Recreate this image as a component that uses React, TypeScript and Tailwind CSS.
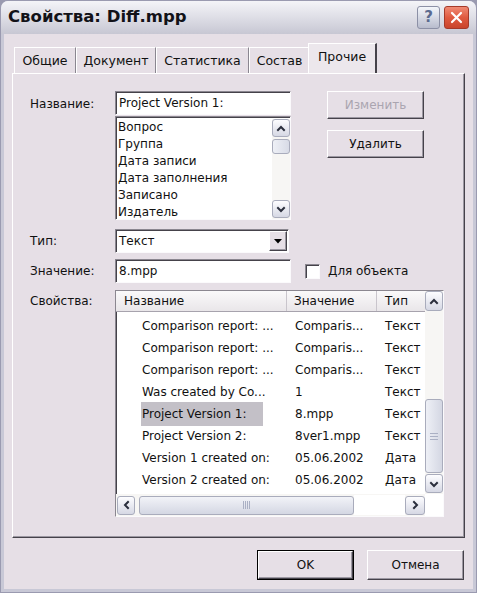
import type { ReactNode } from "react";

const FONT = { fontFamily: '"DejaVu Sans", Verdana, sans-serif' };

function Chevron({ dir }: { dir: "up" | "down" | "left" | "right" }) {
  const d = {
    up: "M2 7 L5 4 L8 7",
    down: "M2 4 L5 7 L8 4",
    left: "M7 2 L4 5 L7 8",
    right: "M4 2 L7 5 L4 8",
  }[dir];
  return (
    <svg width="10" height="10" viewBox="0 0 10 10">
      <path d={d} fill="none" stroke="#2b2f3d" strokeWidth="2" strokeLinecap="square" />
    </svg>
  );
}

function ScrollBtn({ dir, className = "" }: { dir: "up" | "down" | "left" | "right"; className?: string }) {
  return (
    <div
      className={`flex items-center justify-center rounded-[3px] border border-[#a9acbc] bg-gradient-to-b from-[#fdfdff] to-[#d6d8e4] ${className}`}
    >
      <Chevron dir={dir} />
    </div>
  );
}

function Sunken({ className = "", children }: { className?: string; children?: ReactNode }) {
  return (
    <div
      className={`border border-t-[#8b8790] border-l-[#8b8790] border-r-[#fbfafc] border-b-[#fbfafc] shadow-[inset_1px_1px_0_#45424a] bg-white ${className}`}
    >
      {children}
    </div>
  );
}

function Raised({
  className = "",
  children,
  disabled,
}: {
  className?: string;
  children: ReactNode;
  disabled?: boolean;
}) {
  return (
    <div
      className={`flex items-center justify-center border border-t-white border-l-white border-r-[#45424a] border-b-[#45424a] shadow-[inset_-1px_-1px_0_#9c98a2] bg-[#e6dfe6] text-[12px] ${
        disabled ? "text-[#aaa5b0]" : "text-[#111]"
      } ${className}`}
    >
      {children}
    </div>
  );
}

const tabs = [
  { label: "Общие", w: 62 },
  { label: "Документ", w: 80 },
  { label: "Статистика", w: 93 },
  { label: "Состав", w: 61 },
];

const listItems = ["Вопрос", "Группа", "Дата записи", "Дата заполнения", "Записано", "Издатель"];

const rows = [
  ["Comparison report: ...", "Comparis...", "Текст"],
  ["Comparison report: ...", "Comparis...", "Текст"],
  ["Comparison report: ...", "Comparis...", "Текст"],
  ["Was created by Co...", "1", "Текст"],
  ["Project Version 1:", "8.mpp", "Текст"],
  ["Project Version 2:", "8ver1.mpp", "Текст"],
  ["Version 1 created on:", "05.06.2002", "Дата"],
  ["Version 2 created on:", "05.06.2002", "Дата"],
];

export default function App() {
  return (
    <div style={FONT} className="w-[477px] h-[593px] bg-[#9a9ab0] p-px text-[12px] text-[#111]">
      <div className="flex h-full flex-col rounded-t-[7px] border-x-[3px] border-b-[3px] border-[#c8c8d6] bg-[#e6dfe6]">
        {/* title bar */}
        <div className="-mx-[3px] flex h-[33px] shrink-0 items-center rounded-t-[7px] bg-gradient-to-b from-[#f4f4f8] via-[#dedee6] to-[#c7c7d3] pl-[7px] pr-[7px]">
          <span className="text-[16.5px] font-bold text-[#121218]">Свойства: Diff.mpp</span>
          <div className="ml-auto flex gap-[4px]">
            <div className="flex h-[23px] w-[23px] items-center justify-center rounded-[3px] border border-[#8c90a6] bg-gradient-to-b from-[#f4f6fb] to-[#b8bccd] text-[15px] font-bold text-[#5a6a90]">
              ?
            </div>
            <div className="flex h-[23px] w-[25px] items-center justify-center rounded-[3px] border border-[#a53a2a] bg-gradient-to-b from-[#ef8a74] via-[#e05a40] to-[#c9442c]">
              <svg width="13" height="13" viewBox="0 0 13 13">
                <path d="M2 2 L11 11 M11 2 L2 11" stroke="white" strokeWidth="2.2" strokeLinecap="round" />
              </svg>
            </div>
          </div>
        </div>

        <div className="flex flex-1 flex-col px-[8px] pt-[9px]">
          {/* tabs */}
          <div className="flex h-[30px] items-end pl-[2px]">
            {tabs.map((t) => (
              <div
                key={t.label}
                style={{ width: t.w }}
                className="flex h-[26px] items-center justify-center border-l border-t border-r border-l-white border-t-white border-r-[#8a8690] pt-[2px] text-[12.5px]"
              >
                {t.label}
              </div>
            ))}
            <div className="-mx-[2px] -mb-px flex h-[31px] w-[69px] items-center justify-center border-l border-t border-r-2 border-l-white border-t-white border-r-[#45424a] bg-[#ece7ec] pb-[3px] text-[12.5px]">
              Прочие
            </div>
          </div>

          {/* panel */}
          <div className="h-[465px] w-[453px] border border-t-white border-l-white border-r-[#45424a] border-b-[#45424a] shadow-[inset_-1px_-1px_0_#9c98a2] pl-[17px] pt-[17px]">
            <div className="flex">
              <div className="w-[85px] pt-[4px]">Название:</div>
              <div className="flex flex-col gap-px">
                <Sunken className="flex h-[24px] w-[176px] items-center pl-[3px]">Project Version 1:</Sunken>
                <Sunken className="flex h-[104px] w-[176px] pl-[2px] pt-[2px]">
                  <div className="flex-1 leading-[17px]">
                    {listItems.map((i) => (
                      <div key={i}>{i}</div>
                    ))}
                  </div>
                  <div className="flex w-[18px] flex-col bg-[#f7f6f4] pb-[1px]">
                    <ScrollBtn dir="up" className="h-[18px]" />
                    <div className="mt-[2px] h-[15px] rounded-[3px] border border-[#a9acbc] bg-gradient-to-r from-[#eef0f6] to-[#d8dbe6]" />
                    <div className="flex-1" />
                    <ScrollBtn dir="down" className="h-[18px]" />
                  </div>
                </Sunken>
              </div>
              <div className="ml-[36px] flex flex-col gap-[11px]">
                <Raised disabled className="h-[28px] w-[97px]">
                  Изменить
                </Raised>
                <Raised className="h-[28px] w-[97px]">Удалить</Raised>
              </div>
            </div>

            <div className="mt-[9px] flex items-center">
              <div className="w-[85px]">Тип:</div>
              <Sunken className="flex h-[24px] w-[174px] items-center pl-[3px] pr-px">
                <span className="flex-1">Текст</span>
                <Raised className="h-[20px] w-[18px]">
                  <svg width="8" height="5" viewBox="0 0 8 5">
                    <path d="M0 0 H8 L4 4.5 Z" fill="#000" />
                  </svg>
                </Raised>
              </Sunken>
            </div>

            <div className="mt-[6px] flex items-center">
              <div className="w-[85px]">Значение:</div>
              <Sunken className="flex h-[24px] w-[176px] items-center pl-[3px]">8.mpp</Sunken>
              <Sunken className="ml-[14px] h-[15px] w-[15px]" />
              <span className="ml-[8px]">Для объекта</span>
            </div>

            <div className="mt-[7px] flex">
              <div className="w-[85px] pt-[2px]">Свойства:</div>
              <Sunken className="flex h-[227px] w-[329px] flex-col">
                <div className="flex flex-1 min-h-0">
                  <div className="flex flex-1 flex-col">
                    <div className="flex h-[21px] shrink-0 items-center border-b border-[#a7a3ad] bg-gradient-to-b from-[#faf9fa] to-[#e9e6e9]">
                      <div className="flex h-full w-[171px] items-center border-r border-[#c9c5cc] pl-[8px]">Название</div>
                      <div className="flex h-full w-[90px] items-center border-r border-[#c9c5cc] pl-[7px]">Значение</div>
                      <div className="flex h-full flex-1 items-center pl-[8px]">Тип</div>
                    </div>
                    <div className="pt-[3px]">
                      {rows.map((r, i) => (
                        <div key={i} className="flex h-[22px] items-center whitespace-nowrap">
                          <div className="w-[171px] pl-[26px]">
                            <span className={i === 4 ? "-ml-[1px] inline-block bg-[#c3c0c7] py-[3px] pl-[1px] pr-[16px]" : ""}>{r[0]}</span>
                          </div>
                          <div className="w-[90px] pl-[8px]">{r[1]}</div>
                          <div className="flex-1 overflow-hidden pl-[8px]">{r[2]}</div>
                        </div>
                      ))}
                    </div>
                  </div>
                  <div className="flex w-[18px] flex-col bg-[#f7f6f4] pb-[1px]">
                    <ScrollBtn dir="up" className="h-[20px]" />
                    <div className="flex-1" />
                    <div className="flex h-[74px] items-center justify-center rounded-[3px] border border-[#a9acbc] bg-gradient-to-r from-[#eef0f6] to-[#d4d7e3]">
                      <svg width="8" height="7" viewBox="0 0 8 7">
                        <path d="M0 0.5 H8 M0 3.5 H8 M0 6.5 H8" stroke="#aab0c4" />
                      </svg>
                    </div>
                    <ScrollBtn dir="down" className="mt-[1px] h-[19px]" />
                  </div>
                </div>
                <div className="flex h-[22px] shrink-0">
                  <div className="flex flex-1 items-center bg-[#f7f6f4] py-px pl-px">
                    <ScrollBtn dir="left" className="h-[19px] w-[18px]" />
                    <div className="ml-[4px] flex h-[19px] w-[215px] items-center justify-center rounded-[3px] border border-[#a9acbc] bg-gradient-to-b from-[#f2f3f8] to-[#d4d7e3]">
                      <svg width="7" height="8" viewBox="0 0 7 8">
                        <path d="M0.5 0 V8 M2.5 0 V8 M4.5 0 V8 M6.5 0 V8" stroke="#aab0c4" />
                      </svg>
                    </div>
                    <div className="flex-1 self-stretch bg-white" />
                    <ScrollBtn dir="right" className="h-[19px] w-[20px]" />
                  </div>
                  <div className="w-[18px] bg-white" />
                </div>
              </Sunken>
            </div>
          </div>

          {/* dialog buttons */}
          <div className="mt-[12px] flex justify-end gap-[13px] pr-px">
            <div className="border border-black">
              <Raised className="h-[28px] w-[95px]">OK</Raised>
            </div>
            <Raised className="h-[30px] w-[97px]">Отмена</Raised>
          </div>
        </div>
      </div>
    </div>
  );
}
